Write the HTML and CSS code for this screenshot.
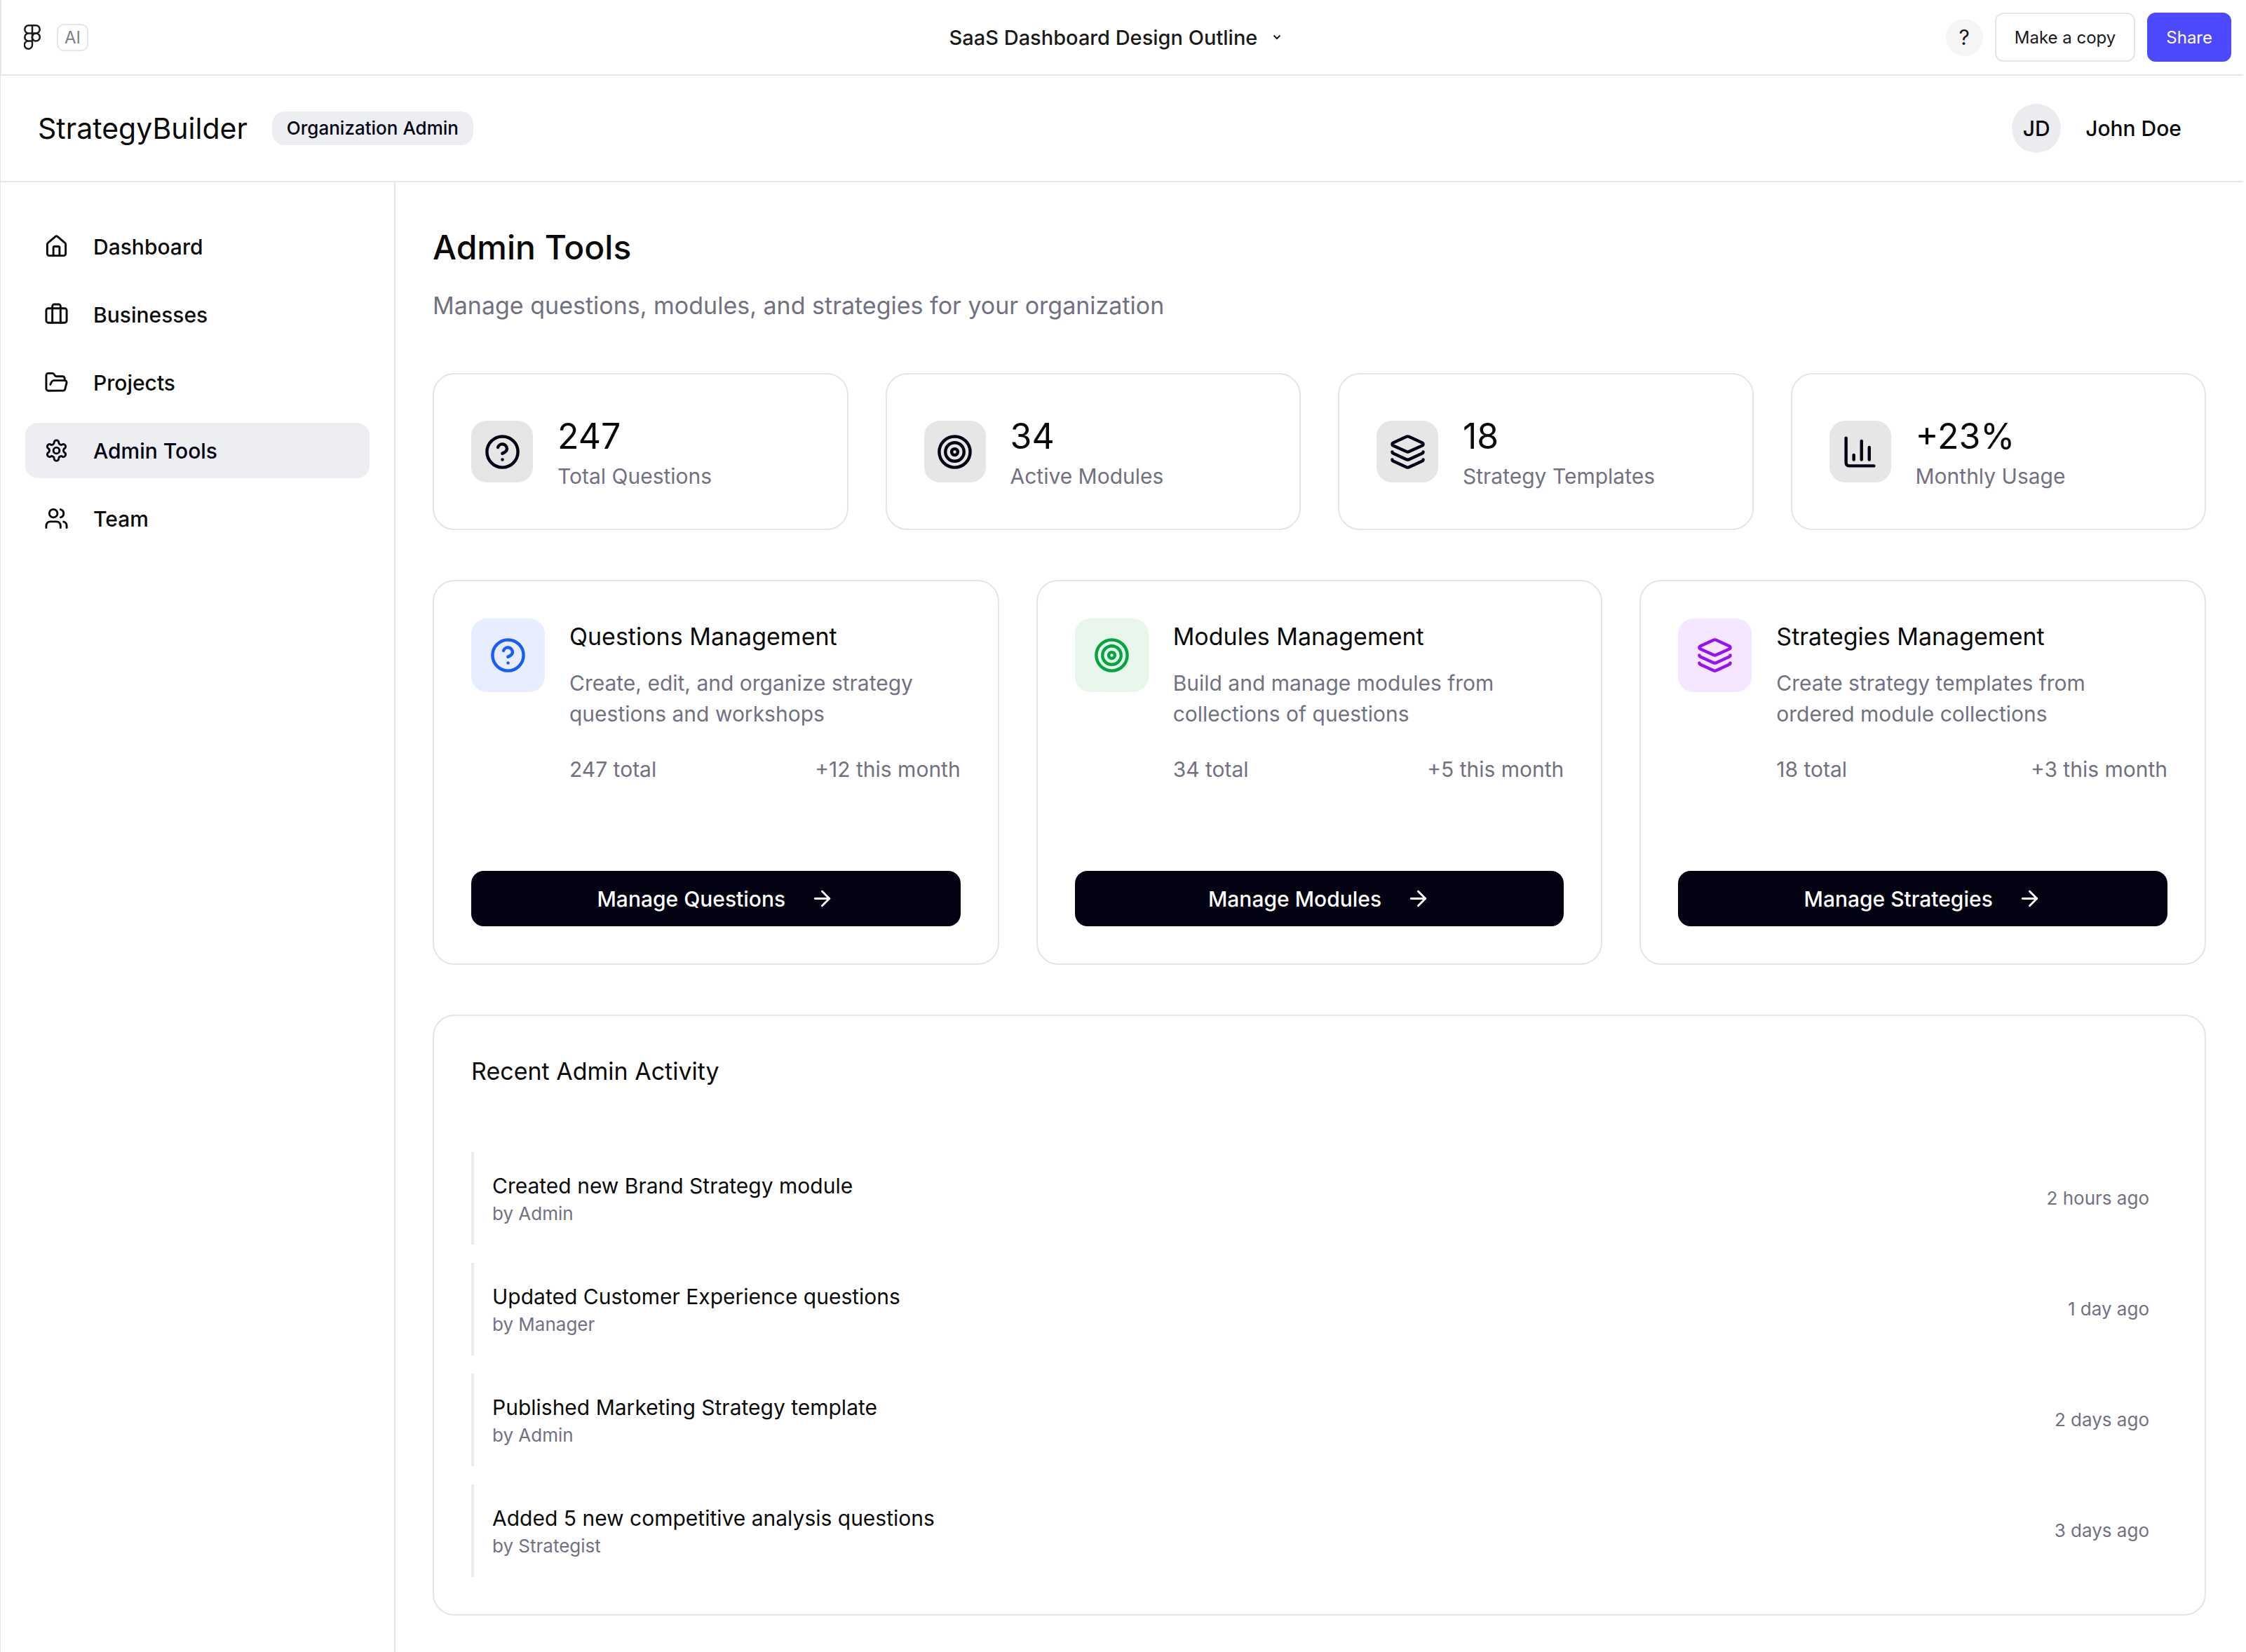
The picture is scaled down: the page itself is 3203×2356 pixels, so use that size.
FILE: index.html
```html
<!DOCTYPE html>
<html lang="en">
<head>
<meta charset="utf-8">
<title>SaaS Dashboard Design Outline</title>
<link rel="stylesheet" href="styles.css">
</head>
<body>
<svg class="sprite" aria-hidden="true">
  <symbol id="i-house" viewBox="0 0 24 24"><path d="M15 21v-8a1 1 0 0 0-1-1h-4a1 1 0 0 0-1 1v8"/><path d="M3 10a2 2 0 0 1 .709-1.528l7-5.999a2 2 0 0 1 2.582 0l7 5.999A2 2 0 0 1 21 10v9a2 2 0 0 1-2 2H5a2 2 0 0 1-2-2z"/></symbol>
  <symbol id="i-briefcase" viewBox="0 0 24 24"><path d="M16 20V4a2 2 0 0 0-2-2h-4a2 2 0 0 0-2 2v16"/><rect width="20" height="14" x="2" y="6" rx="2"/></symbol>
  <symbol id="i-folder" viewBox="0 0 24 24"><path d="m6 14 1.5-2.9A2 2 0 0 1 9.24 10H20a2 2 0 0 1 1.94 2.5l-1.54 6a2 2 0 0 1-1.95 1.5H4a2 2 0 0 1-2-2V5a2 2 0 0 1 2-2h3.9a2 2 0 0 1 1.69.9l.81 1.2a2 2 0 0 0 1.67.9H18a2 2 0 0 1 2 2v2"/></symbol>
  <symbol id="i-settings" viewBox="0 0 24 24"><path d="M12.22 2h-.44a2 2 0 0 0-2 2v.18a2 2 0 0 1-1 1.73l-.43.25a2 2 0 0 1-2 0l-.15-.08a2 2 0 0 0-2.73.73l-.22.38a2 2 0 0 0 .73 2.73l.15.1a2 2 0 0 1 1 1.72v.51a2 2 0 0 1-1 1.74l-.15.09a2 2 0 0 0-.73 2.73l.22.38a2 2 0 0 0 2.73.73l.15-.08a2 2 0 0 1 2 0l.43.25a2 2 0 0 1 1 1.73V20a2 2 0 0 0 2 2h.44a2 2 0 0 0 2-2v-.18a2 2 0 0 1 1-1.73l.43-.25a2 2 0 0 1 2 0l.15.08a2 2 0 0 0 2.73-.73l.22-.39a2 2 0 0 0-.73-2.73l-.15-.08a2 2 0 0 1-1-1.74v-.5a2 2 0 0 1 1-1.74l.15-.09a2 2 0 0 0 .73-2.73l-.22-.38a2 2 0 0 0-2.73-.73l-.15.08a2 2 0 0 1-2 0l-.43-.25a2 2 0 0 1-1-1.73V4a2 2 0 0 0-2-2z"/><circle cx="12" cy="12" r="3"/></symbol>
  <symbol id="i-users" viewBox="0 0 24 24"><path d="M16 21v-2a4 4 0 0 0-4-4H6a4 4 0 0 0-4 4v2"/><circle cx="9" cy="7" r="4"/><path d="M22 21v-2a4 4 0 0 0-3-3.87"/><path d="M16 3.13a4 4 0 0 1 0 7.75"/></symbol>
  <symbol id="i-help" viewBox="0 0 24 24"><circle cx="12" cy="12" r="10"/><path d="M9.09 9a3 3 0 0 1 5.83 1c0 2-3 3-3 3"/><path d="M12 17h.01"/></symbol>
  <symbol id="i-target" viewBox="0 0 24 24"><circle cx="12" cy="12" r="10"/><circle cx="12" cy="12" r="6"/><circle cx="12" cy="12" r="2"/></symbol>
  <symbol id="i-layers" viewBox="0 0 24 24"><path d="M12.83 2.18a2 2 0 0 0-1.66 0L2.6 6.08a1 1 0 0 0 0 1.83l8.58 3.91a2 2 0 0 0 1.66 0l8.58-3.9a1 1 0 0 0 0-1.83z"/><path d="M2 12a1 1 0 0 0 .58.91l8.6 3.91a2 2 0 0 0 1.65 0l8.58-3.9A1 1 0 0 0 22 12"/><path d="M2 17a1 1 0 0 0 .58.91l8.6 3.91a2 2 0 0 0 1.65 0l8.58-3.9A1 1 0 0 0 22 17"/></symbol>
  <symbol id="i-chart" viewBox="0 0 24 24"><path d="M3 3v16a2 2 0 0 0 2 2h16"/><path d="M18 17V9"/><path d="M13 17V5"/><path d="M8 17v-3"/></symbol>
  <symbol id="i-arrow" viewBox="0 0 24 24"><path d="M5 12h14"/><path d="m12 5 7 7-7 7"/></symbol>
</svg>

<div class="topbar">
  <div class="topbar-start">
    <svg class="figma" viewBox="0 0 24 36" role="img" aria-label="Figma"><path d="M12 1.300H6.800a5.500 5.500 0 0 0 0 11.100H12zM12 1.300h5.200a5.500 5.500 0 0 1 0 11.100H12zM12 12.400H6.800a5.500 5.500 0 0 0 0 11.100H12zM12 23.500H6.800a5.600 5.600 0 1 0 5.200 5.700z"/><circle cx="17.300" cy="18" r="5.500"/></svg>
    <span class="ai">AI</span>
  </div>
  <button class="file-menu" type="button">SaaS Dashboard Design Outline
    <svg class="chevron" viewBox="0 0 12 8" aria-hidden="true"><path d="M1.500 1.500 6 6l4.500-4.500"/></svg>
  </button>
  <div class="topbar-end">
    <button class="help" type="button" aria-label="Help">?</button>
    <button class="btn-top" type="button">Make a copy</button>
    <button class="btn-top btn-share" type="button">Share</button>
  </div>
</div>

<div class="app">
  <header class="header">
    <div class="brand-row">
      <span class="brand">StrategyBuilder</span>
      <span class="badge">Organization Admin</span>
    </div>
    <div class="user">
      <span class="avatar">JD</span>
      <span class="user-name">John Doe</span>
    </div>
  </header>

  <div class="shell">
    <nav class="sidebar" aria-label="Main">
      <a class="nav-item" href="#dashboard"><svg class="icon-sm"><use href="#i-house"/></svg>Dashboard</a>
      <a class="nav-item" href="#businesses"><svg class="icon-sm"><use href="#i-briefcase"/></svg>Businesses</a>
      <a class="nav-item" href="#projects"><svg class="icon-sm"><use href="#i-folder"/></svg>Projects</a>
      <a class="nav-item active" href="#admin" aria-current="page"><svg class="icon-sm"><use href="#i-settings"/></svg>Admin Tools</a>
      <a class="nav-item" href="#team"><svg class="icon-sm"><use href="#i-users"/></svg>Team</a>
    </nav>

    <main class="main">
      <h1 class="page-title">Admin Tools</h1>
      <p class="page-sub">Manage questions, modules, and strategies for your organization</p>

      <section class="stats" aria-label="Statistics">
        <div class="card stat">
          <span class="stat-icon"><svg class="icon-lg"><use href="#i-help"/></svg></span>
          <div><p class="stat-value">247</p><p class="muted">Total Questions</p></div>
        </div>
        <div class="card stat">
          <span class="stat-icon"><svg class="icon-lg"><use href="#i-target"/></svg></span>
          <div><p class="stat-value">34</p><p class="muted">Active Modules</p></div>
        </div>
        <div class="card stat">
          <span class="stat-icon"><svg class="icon-lg"><use href="#i-layers"/></svg></span>
          <div><p class="stat-value">18</p><p class="muted">Strategy Templates</p></div>
        </div>
        <div class="card stat">
          <span class="stat-icon"><svg class="icon-lg"><use href="#i-chart"/></svg></span>
          <div><p class="stat-value">+23%</p><p class="muted">Monthly Usage</p></div>
        </div>
      </section>

      <section class="tools" aria-label="Management">
        <article class="card tool">
          <div class="tool-head">
            <span class="tool-icon blue"><svg class="icon-lg"><use href="#i-help"/></svg></span>
            <div class="tool-body">
              <h2 class="card-title">Questions Management</h2>
              <p class="muted tool-desc">Create, edit, and organize strategy questions and workshops</p>
              <div class="muted tool-meta"><span>247 total</span><span>+12 this month</span></div>
            </div>
          </div>
          <button class="btn-primary" type="button">Manage Questions<svg class="icon-sm"><use href="#i-arrow"/></svg></button>
        </article>
        <article class="card tool">
          <div class="tool-head">
            <span class="tool-icon green"><svg class="icon-lg"><use href="#i-target"/></svg></span>
            <div class="tool-body">
              <h2 class="card-title">Modules Management</h2>
              <p class="muted tool-desc">Build and manage modules from collections of questions</p>
              <div class="muted tool-meta"><span>34 total</span><span>+5 this month</span></div>
            </div>
          </div>
          <button class="btn-primary" type="button">Manage Modules<svg class="icon-sm"><use href="#i-arrow"/></svg></button>
        </article>
        <article class="card tool">
          <div class="tool-head">
            <span class="tool-icon purple"><svg class="icon-lg"><use href="#i-layers"/></svg></span>
            <div class="tool-body">
              <h2 class="card-title">Strategies Management</h2>
              <p class="muted tool-desc">Create strategy templates from ordered module collections</p>
              <div class="muted tool-meta"><span>18 total</span><span>+3 this month</span></div>
            </div>
          </div>
          <button class="btn-primary" type="button">Manage Strategies<svg class="icon-sm"><use href="#i-arrow"/></svg></button>
        </article>
      </section>

      <section class="card activity">
        <h2 class="card-title">Recent Admin Activity</h2>
        <ul class="feed">
          <li class="feed-item"><div><p class="feed-title">Created new Brand Strategy module</p><p class="small">by Admin</p></div><span class="small">2 hours ago</span></li>
          <li class="feed-item"><div><p class="feed-title">Updated Customer Experience questions</p><p class="small">by Manager</p></div><span class="small">1 day ago</span></li>
          <li class="feed-item"><div><p class="feed-title">Published Marketing Strategy template</p><p class="small">by Admin</p></div><span class="small">2 days ago</span></li>
          <li class="feed-item"><div><p class="feed-title">Added 5 new competitive analysis questions</p><p class="small">by Strategist</p></div><span class="small">3 days ago</span></li>
        </ul>
      </section>
    </main>
  </div>
</div>
</body>
</html>
```
FILE: styles.css
```css
:root {
  --line: #e5e5e5;
  --ink: #0a0a0a;
  --primary: #030213;
  --muted: #717182;
  --soft: #ececf0;
}

* { box-sizing: border-box; }

html, body { min-height: 100vh; }

body {
  display: flex;
  flex-direction: column;
  margin: 0;
  padding-right: 4px;
  background: #fff;
  color: var(--ink);
  font-family: Inter, "Liberation Sans", sans-serif;
  font-size: 30px;
  line-height: 44px;
}

h1, h2, p, ul { margin: 0; padding: 0; font-weight: 400; }
ul { list-style: none; }
button { font-family: inherit; cursor: pointer; }

.sprite { position: absolute; width: 0; height: 0; }

.icon-sm, .icon-lg {
  flex: none;
  fill: none;
  stroke: currentColor;
  stroke-width: 2;
  stroke-linecap: round;
  stroke-linejoin: round;
}
.icon-sm { width: 35px; height: 35px; }
.icon-lg { width: 53px; height: 53px; }

/* Editor bar */
.topbar {
  display: grid;
  grid-template-columns: 1fr auto 1fr;
  align-items: center;
  height: 108px;
  padding: 0 17px 0 32px;
  border-left: 2px solid var(--line);
  border-bottom: 2px solid var(--line);
  color: #1a1a1a;
}
.topbar-start { display: flex; align-items: center; gap: 23px; }
.figma { width: 24px; height: 36px; fill: none; stroke: #1a1a1a; stroke-width: 2.5; }
.ai {
  width: 45px;
  height: 39px;
  border: 2px solid #e6e6e6;
  border-radius: 10px;
  color: #808080;
  font-size: 24px;
  line-height: 35px;
  text-align: center;
}
.file-menu {
  display: flex;
  align-items: center;
  gap: 22px;
  padding: 0 35px 0 0;
  border: 0;
  background: none;
  color: inherit;
  font-size: 29px;
  font-weight: 500;
}
.chevron { width: 12px; height: 8px; fill: none; stroke: currentColor; stroke-width: 2; }
.topbar-end { display: flex; justify-content: flex-end; align-items: center; gap: 17px; }
.help {
  width: 53px;
  height: 53px;
  padding: 0;
  border: 0;
  border-radius: 50%;
  background: #f5f5f5;
  color: inherit;
  font-size: 30px;
}
.btn-top {
  height: 70px;
  padding: 0 26px;
  border: 2px solid #e6e6e6;
  border-radius: 12px;
  background: #fff;
  color: inherit;
  font-size: 24px;
}
.btn-share { padding: 0 25px; border-color: #4d49fc; background: #4d49fc; color: #fff; }

/* Application */
.app { display: flex; flex: 1; flex-direction: column; border-left: 1px solid var(--line); }
.header {
  display: flex;
  justify-content: space-between;
  align-items: center;
  height: 152px;
  padding: 0 88px 0 53px;
  border-bottom: 2px solid var(--line);
}
.brand-row, .user { display: flex; align-items: center; gap: 35px; }
.brand { font-size: 41px; line-height: 62px; }
.badge {
  padding: 6px 21px;
  border-radius: 18px;
  background: #eceef2;
  color: var(--primary);
  font-size: 26px;
  font-weight: 500;
  line-height: 36px;
}
.avatar {
  width: 70px;
  height: 70px;
  border-radius: 50%;
  background: var(--soft);
  font-weight: 500;
  line-height: 70px;
  text-align: center;
}
.user-name { font-weight: 500; }

.shell { display: flex; flex: 1; }
.sidebar {
  display: flex;
  flex: none;
  flex-direction: column;
  gap: 18px;
  width: 563px;
  padding: 52px 35px;
  border-right: 2px solid var(--line);
}
.nav-item {
  display: flex;
  align-items: center;
  gap: 35px;
  height: 79px;
  padding: 0 27px;
  border-radius: 18px;
  color: inherit;
  font-weight: 500;
  text-decoration: none;
}
.nav-item.active { background: #eceef2; color: var(--primary); }

.main { flex: 1; min-width: 0; padding: 53px; }
.page-title { margin-bottom: 17px; font-size: 48px; font-weight: 500; line-height: 79px; }
.page-sub { margin-bottom: 70px; color: var(--muted); font-size: 34px; line-height: 53px; }
.muted { color: var(--muted); }

.card { border: 2px solid var(--line); border-radius: 31px; background: #fff; padding: 53px; }
.stats { display: grid; grid-template-columns: repeat(4, 1fr); gap: 53px; margin-bottom: 71px; }
.stat { display: flex; align-items: center; gap: 35px; }
.stat-icon {
  display: grid;
  place-items: center;
  width: 88px;
  height: 88px;
  border-radius: 22px;
  background: #e6e6e7;
  color: var(--primary);
}
.stat-value { font-size: 50px; line-height: 70px; }

.tools { display: grid; grid-template-columns: repeat(3, 1fr); gap: 53px; margin-bottom: 71px; }
.tool { display: flex; flex-direction: column; gap: 123px; }
.tool-head { display: flex; align-items: flex-start; gap: 35px; }
.tool-icon {
  display: grid;
  flex: none;
  place-items: center;
  width: 105px;
  height: 105px;
  border-radius: 22px;
}
.blue { background: #e8eeff; color: #155dfc; }
.green { background: #e8f6ec; color: #00a63e; }
.purple { background: #f5e7ff; color: #9810fa; }
.tool-body { flex: 1; }
.card-title { font-size: 34px; line-height: 52px; }
.tool-desc { margin: 18px 0 35px; }
.tool-meta { display: flex; justify-content: space-between; }
.btn-primary {
  display: flex;
  justify-content: center;
  align-items: center;
  gap: 35px;
  height: 79px;
  border: 0;
  border-radius: 18px;
  background: var(--primary);
  color: #fff;
  font-size: 30px;
  font-weight: 500;
}

.feed { display: flex; flex-direction: column; gap: 26px; margin-top: 89px; }
.feed-item {
  display: flex;
  justify-content: space-between;
  align-items: center;
  padding: 26px;
  border-left: 4px solid var(--soft);
}
.small { color: var(--muted); font-size: 26px; line-height: 36px; }
```
